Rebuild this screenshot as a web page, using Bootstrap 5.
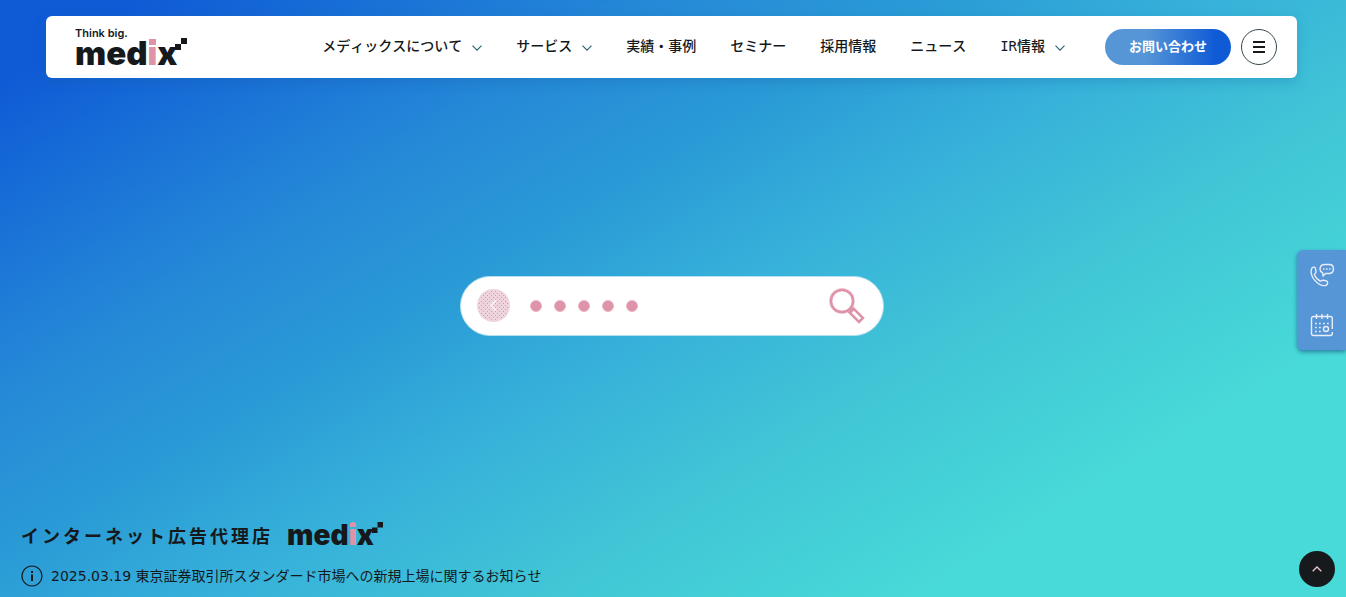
<!DOCTYPE html>
<html lang="ja">
<head>
<meta charset="utf-8">
<meta name="viewport" content="width=device-width, initial-scale=1">
<title>medix</title>
<link href="https://cdn.jsdelivr.net/npm/bootstrap@5.3.0/dist/css/bootstrap.min.css" rel="stylesheet">
<style>
  :root { --ink: #15191c; --pink: #df93a9; }
  body {
    font-family: "DejaVu Sans", "Noto Sans CJK JP", sans-serif;
    font-size: 14px;
    line-height: 20px;
    font-kerning: none;
    color: var(--ink);
    background: linear-gradient(149deg, #0f5bd6 6%, #2589d7 28%, #2a9bd6 40%, #36b0da 51%, #40c4d6 64%, #48dad8 82%) no-repeat;
  }
  a { color: inherit; text-decoration: none; }
  .site-header {
    margin: 16px 49px 0 46px;
    padding: 0 20px 0 29px;
    min-height: 62px;
    border-radius: 6px;
    box-shadow: 0 4px 12px rgba(20, 90, 160, .25);
  }
  .logo-tag { font: 600 11px/12px Inter, sans-serif; }
  .wordmark { font: 900 33px/28px Inter, sans-serif; }
  .wordmark span { position: relative; color: var(--pink); }
  .wordmark span::before {
    content: ""; position: absolute; inset: 0 1px auto 2px; height: 6px; background: var(--pink);
  }
  .pixels { width: 12px; height: 12px; margin: -1px 0 0 -2px; }
  .wordmark-sm { font-size: 28px; line-height: 24px; }
  .wordmark-sm span::before { top: 0; height: 4px; }
  .wordmark-sm .pixels { width: 11px; height: 11px; }
  .main-nav { gap: 34px; padding-right: 40px; padding-bottom: 2px; font-weight: 500; }
  .main-nav a { gap: 10px; }
  .latin { font-family: "DejaVu Sans Mono", monospace; }
  .chev { width: 10px; height: 6px; margin-top: 4px; }
  .btn-contact {
    width: 126px; height: 36px; padding: 0; margin-right: 10px;
    font-size: 13px; font-weight: 700; color: #fff;
    background: linear-gradient(90deg, #5796d6 32%, #0f5bd6 88%);
  }
  .btn-contact:hover { color: #fff; }
  .btn-menu { width: 36px; height: 36px; border: 1px solid #34474f; border-radius: 50%; }
  .search-pill {
    width: 424px; height: 60px; padding: 0 18px 0 16px; margin-right: 3px;
    border: 1px solid #b5e0f0;
  }
  .back-dot { width: 33px; height: 33px; margin-right: 20px; }
  .dots { gap: 12px; }
  .dot { width: 12px; height: 12px; border-radius: 50%; background: var(--pink); border: 1px solid #e6b4c3; }
  .hero { padding-top: 12px; }
  .catch { font-size: 18px; font-weight: 700; letter-spacing: 3px; line-height: 24px; padding-top: 4px; margin: 0 14px 0 0; }
  .lower { padding: 0 21px 10px; }
  .side-panel {
    top: 250px; right: 0; width: 49px; height: 100px;
    border-radius: 6px 0 0 6px; background: #5796d6;
    box-shadow: 0 2px 4px rgba(20, 70, 120, .6);
  }
  .to-top { right: 11px; bottom: 10px; width: 36px; height: 36px; background: #171a1c; }
</style>
</head>
<body>
<div class="d-flex flex-column min-vh-100">
  <header class="site-header bg-white d-flex align-items-center">
    <a href="#" class="d-flex flex-column me-auto" aria-label="medix">
      <span class="logo-tag">Think big.</span>
      <span class="wordmark d-flex">med<span>i</span>x<svg class="pixels" viewBox="0 0 12 12" fill="currentColor"><path d="M6 0h6v6H6zM0 6h6v6H0z"/></svg></span>
    </a>
    <nav class="main-nav d-flex align-items-center text-nowrap" aria-label="メイン">
      <a href="#" class="d-flex align-items-center">メディックスについて<svg class="chev" viewBox="0 0 10 6" fill="none" stroke="#2f6673" stroke-width="1.2"><path d="M.5.7 5 5.200 9.500.7"/></svg></a>
      <a href="#" class="d-flex align-items-center">サービス<svg class="chev" viewBox="0 0 10 6" fill="none" stroke="#2f6673" stroke-width="1.2"><path d="M.5.7 5 5.200 9.500.7"/></svg></a>
      <a href="#">実績・事例</a>
      <a href="#">セミナー</a>
      <a href="#">採用情報</a>
      <a href="#">ニュース</a>
      <a href="#" class="d-flex align-items-center"><span><span class="latin">IR</span>情報</span><svg class="chev" viewBox="0 0 10 6" fill="none" stroke="#2f6673" stroke-width="1.2"><path d="M.5.7 5 5.200 9.500.7"/></svg></a>
    </nav>
    <a href="#" class="btn btn-contact rounded-pill border-0 d-flex align-items-center justify-content-center">お問い合わせ</a>
    <button type="button" class="btn-menu bg-white d-flex align-items-center justify-content-center p-0" aria-label="メニュー">
      <svg width="12" height="12" viewBox="0 0 12 12" fill="#171a1c"><path d="M0 0h12v2H0zM0 5h12v2H0zM0 10h12v2H0z"/></svg>
    </button>
  </header>

  <main class="hero flex-grow-1 d-flex align-items-center justify-content-center">
    <div class="search-pill bg-white rounded-pill d-flex align-items-center">
      <svg class="back-dot" viewBox="0 0 33 33">
        <defs><pattern id="grain" width="4" height="4" patternUnits="userSpaceOnUse"><path d="M0 0h1v1H0zM2 2h1v1H2z" fill="#df93a9"/></pattern></defs>
        <circle cx="16.500" cy="16.500" r="16.500" fill="#efd3dd"/><circle cx="16.500" cy="16.500" r="15" fill="url(#grain)"/>
        <path d="M19 11.500 14 16.500l5 5" fill="none" stroke="#fbf1f4" stroke-width="2"/>
      </svg>
      <div class="dots d-flex me-auto"><i class="dot"></i><i class="dot"></i><i class="dot"></i><i class="dot"></i><i class="dot"></i></div>
      <button type="button" class="btn p-0 border-0 d-flex" aria-label="検索">
        <svg width="36" height="36" viewBox="0 0 36 36" fill="none" stroke="#df93a9">
          <circle cx="13" cy="13" r="11.500" stroke="#efd3dd" stroke-width="3"/>
          <circle cx="13" cy="13" r="11" stroke-width="2.500"/>
          <path d="m20.500 21 3 3" stroke-width="4"/>
          <path d="m20.500 24.500 4-4 9.500 9.500-4 4z" stroke-width="2.500"/>
        </svg>
      </button>
    </div>
  </main>

  <section class="lower">
    <div class="d-flex align-items-center mb-3">
      <h1 class="catch">インターネット広告代理店</h1>
      <span class="wordmark wordmark-sm d-flex" aria-label="medix">med<span>i</span>x<svg class="pixels" viewBox="0 0 12 12" fill="currentColor"><path d="M6 0h6v6H6zM0 6h6v6H0z"/></svg></span>
    </div>
    <a href="#" class="d-flex align-items-center gap-2">
      <svg width="22" height="22" viewBox="0 0 22 22" fill="none" stroke="#171a1c"><circle cx="11" cy="11" r="10" stroke-width="1.200"/><path d="M11 9.500V16M11 6v2" stroke-width="2"/></svg>
      <span>2025.03.19 東京証券取引所スタンダード市場への新規上場に関するお知らせ</span>
    </a>
  </section>
</div>

<aside class="side-panel position-fixed d-flex flex-column align-items-center justify-content-around">
  <a href="#" class="d-flex" aria-label="電話で相談">
    <svg width="26" height="24" viewBox="0 0 26 24" fill="none" stroke="#e9edf8" stroke-width="1.400" stroke-linejoin="round">
      <path d="M15.500 1.500h5c5 0 5.500 8.500 0 9h-4L14 13l-.3-3.200C9.500 8 10.500 1.500 15.500 1.500z"/>
      <path d="M14 6h1.500m1.500 0h1.500m1.500 0h1.500"/>
      <path d="M2.500 6c.5-2 3.500-3 4-.5l.5 3.500c0 1.500-2 1.500-1.500 3 1.200 2.800 3.500 5 5.500 6 1.500.5 1.500-1 3-.8l3 .5c2.500.8 2 4-.2 4.800C9 23.500.5 14 2.500 6z"/>
    </svg>
  </a>
  <a href="#" class="d-flex" aria-label="予約する">
    <svg width="24" height="24" viewBox="0 0 24 24" fill="none" stroke="#e9edf8" stroke-width="1.400">
      <path d="M22.300 16V5.500a2 2 0 0 0-2-2H3.500a2 2 0 0 0-2 2v15a2 2 0 0 0 2 2h16.800a2 2 0 0 0 2-2V19M6.500 1v5M12 1v5M17.500 1v5"/>
      <path d="M5 10.500h14M5 14.500h8M5 18.500h8" stroke-dasharray="1.800 2.200"/><circle cx="16" cy="16" r="2.500"/>
    </svg>
  </a>
</aside>
<a href="#" class="to-top position-fixed rounded-circle d-flex align-items-center justify-content-center" aria-label="ページの先頭へ">
  <svg width="10" height="6" viewBox="0 0 10 6" fill="none" stroke="#f0c5cf" stroke-width="1.300"><path d="M.7 5.300 5 1l4.300 4.300"/></svg>
</a>
<script src="https://cdn.jsdelivr.net/npm/bootstrap@5.3.0/dist/js/bootstrap.bundle.min.js"></script>
</body>
</html>
